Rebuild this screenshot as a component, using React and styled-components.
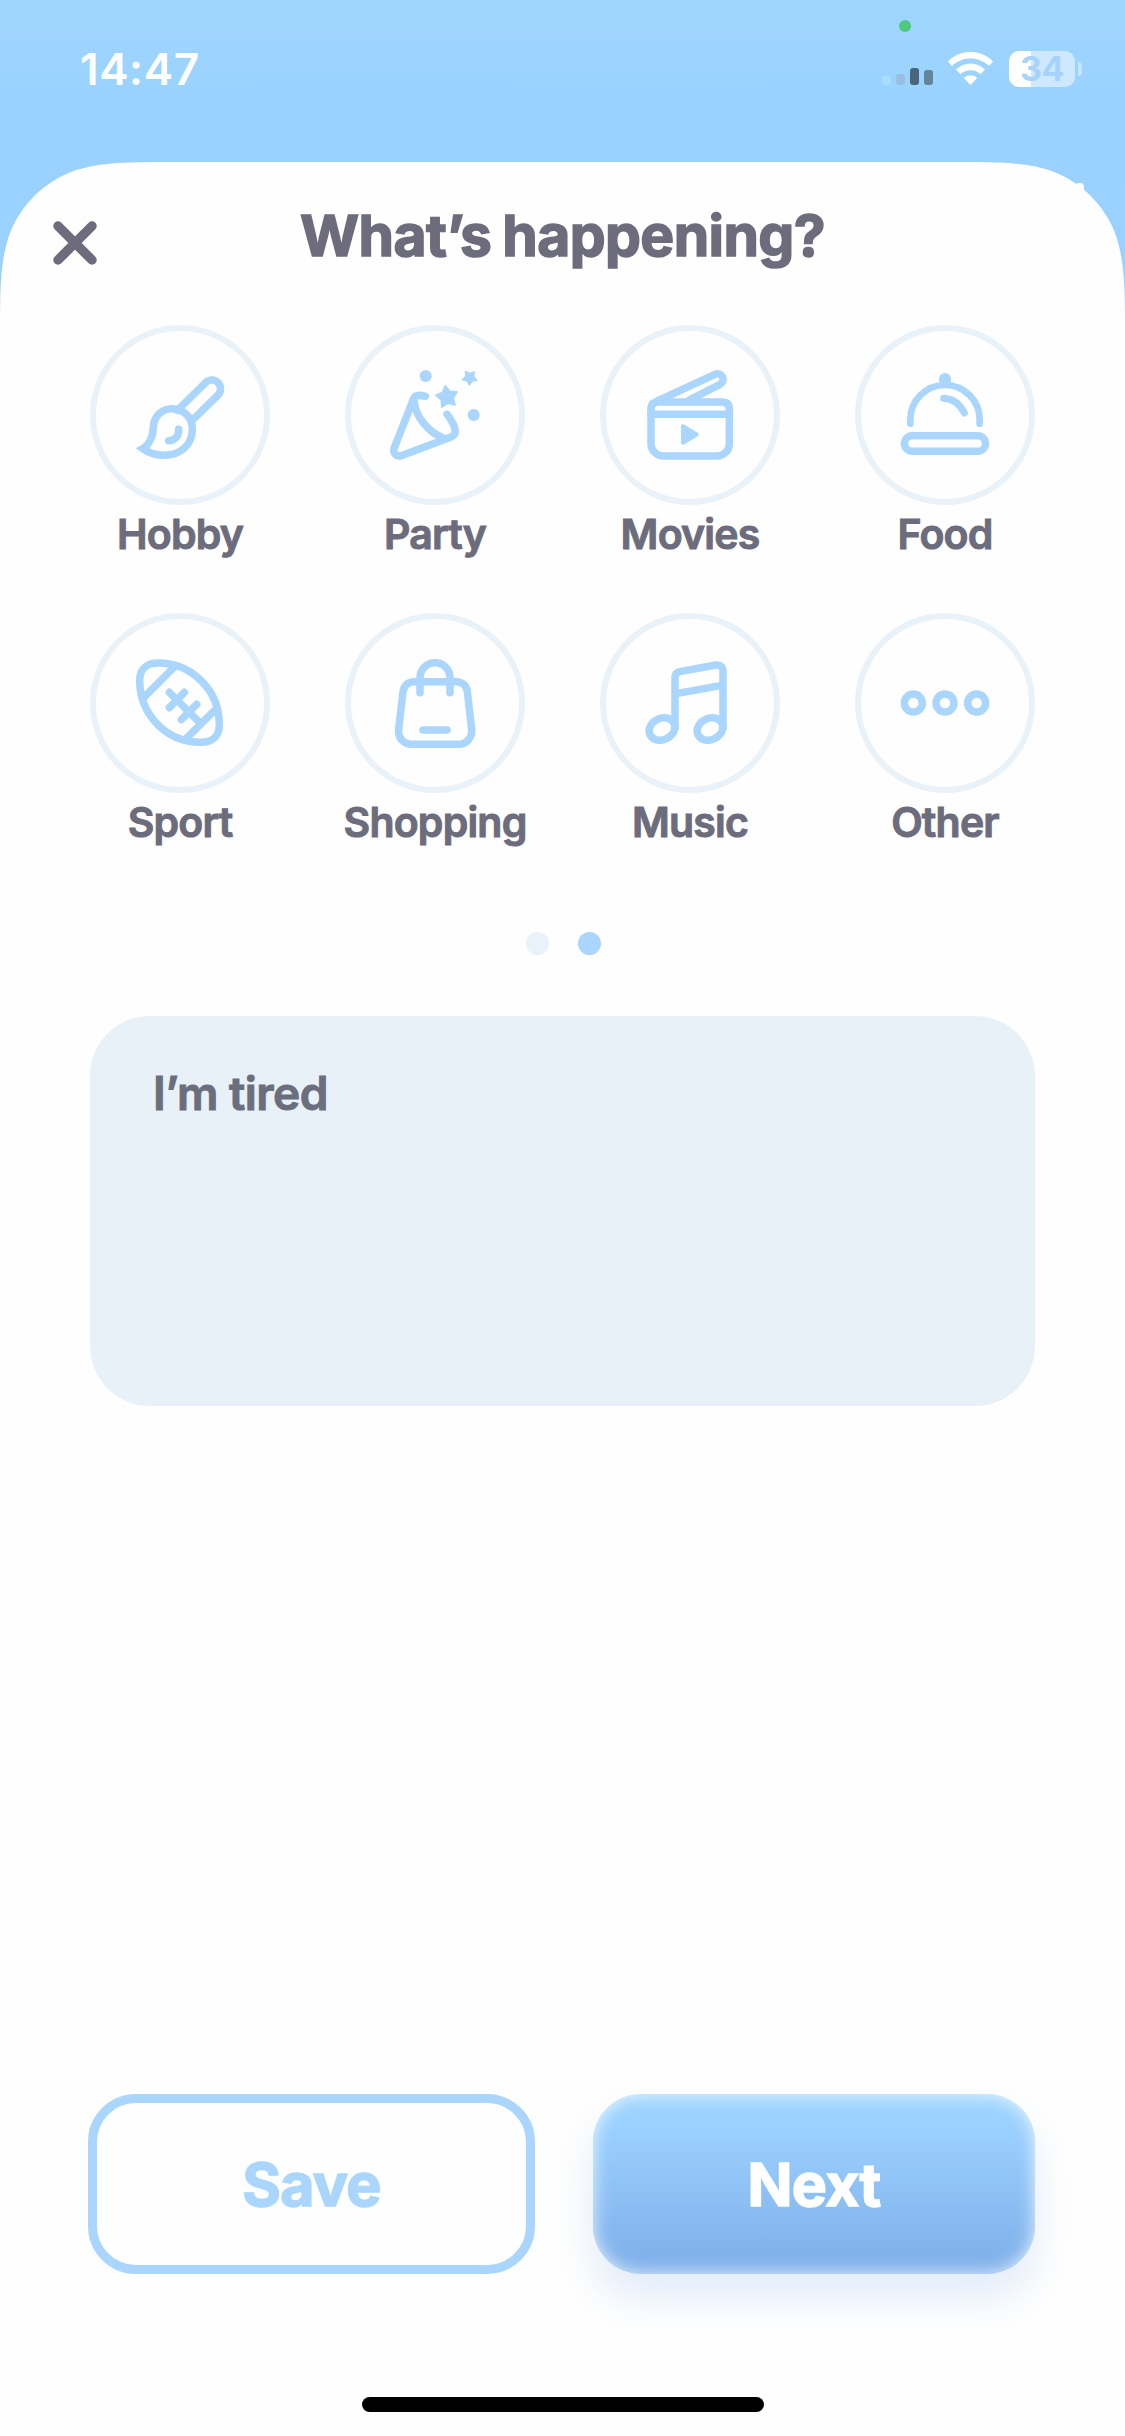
import React from 'react'
import styled, {createGlobalStyle} from 'styled-components'

const sky = '#aad5fd'
const ink = '#6c6c7c'
const mist = '#eaf2f9'

const starPoints = (cx, cy, r, turn) =>
  Array.from({length: 10}, (_, i) => {
    const radius = i % 2 ? r * 0.56 : r
    const angle = ((turn + i * 36) * Math.PI) / 180
    return `${(cx + radius * Math.cos(angle)).toFixed(1)},${(cy + radius * Math.sin(angle)).toFixed(1)}`
  }).join(' ')

const HobbyIcon = () => (
  <Glyph>
    <path d="M292 286 L377 203 A26 26 0 0 1 414 240 L336 317" />
    <path strokeLinejoin="miter" d="M188 401 C207 390 220 365 220 335 C222 303 246 281 276 281 C311 281 337 307 337 343 C337 389 302 421 253 421 C227 421 205 413 188 401 Z" />
    <path d="M296 343 C297 363 284 377 266 377" />
  </Glyph>
)

const PartyIcon = () => (
  <Glyph>
    <path d="M271 244 C257 240 240 239 235 253 L178 398 C172 414 184 427 199 422 L350 365 C369 357 361 331 336 298" />
    <path d="M238 262 C243 308 284 354 324 368" />
    <circle cx="272" cy="183" r="18" fill={sky} stroke="none" />
    <circle cx="416" cy="300" r="18" fill={sky} stroke="none" />
    <polygon points={starPoints(336, 246, 34, -99)} fill={sky} strokeWidth="5" />
    <polygon points={starPoints(404, 188, 22.5, 92)} fill={sky} strokeWidth="4" />
  </Glyph>
)

const MoviesIcon = () => (
  <Glyph>
    <path d="M205 261 H396 Q418 261 418 283 V386 A37 37 0 0 1 381 423 H220 A37 37 0 0 1 183 386 V283 Q183 261 205 261 Z" />
    <path d="M183 298 H418" />
    <path d="M202 258 L375 178 A16.5 16.5 0 0 1 390 208 L300 254" />
    <path d="M279 334 V383 L320 358.500 Z" fill={sky} strokeWidth="12" />
  </Glyph>
)

const FoodIcon = () => (
  <Glyph>
    <path strokeWidth="20" d="M196 326 V314 A104 104 0 0 1 404 314 V326" />
    <path strokeWidth="36" d="M300 192 V196" />
    <path strokeWidth="21" d="M296 250 C324 251 345 268 358 294" />
    <rect x="178.500" y="362.500" width="243" height="46" rx="23" />
  </Glyph>
)

const SportIcon = () => (
  <Glyph>
    <path d="M179 231 C179 199 201 180 235 180 C330 180 418 256 418 366 C418 399 398 418 362 418 C255 418 179 331 179 231 Z" />
    <path d="M281 194 L192 283 M407 319 L319 406" />
    <path d="M268 268 L356 356 M313 268 L268 314 M350 304 L304 350" />
  </Glyph>
)

const ShoppingIcon = () => (
  <Glyph>
    <path d="M237 236 H363 C383 236 395 249 397 266 L410 379 C412 404 395 424 370 424 H232 C206 424 188 404 191 379 L204 266 C207 247 219 236 237 236 Z" />
    <path d="M255 269 V224 A45 45 0 0 1 345 224 V269" />
    <path d="M264 381 H336" />
  </Glyph>
)

const MusicIcon = () => (
  <Glyph>
    <path d="M255 373 V223 Q255 209 269 206 L378 186 Q399 185 399 205 V373" />
    <path d="M258 272 L396 247" />
    <ellipse cx="216" cy="378" rx="40" ry="32" transform="rotate(-25 216 378)" />
    <ellipse cx="360" cy="378" rx="40" ry="32" transform="rotate(-25 360 378)" />
  </Glyph>
)

const OtherIcon = () => (
  <Glyph>
    <circle cx="205" cy="300" r="27" />
    <circle cx="300" cy="300" r="27" />
    <circle cx="395" cy="300" r="27" />
  </Glyph>
)

const activities = [
  {name: 'Hobby', Icon: HobbyIcon},
  {name: 'Party', Icon: PartyIcon},
  {name: 'Movies', Icon: MoviesIcon},
  {name: 'Food', Icon: FoodIcon},
  {name: 'Sport', Icon: SportIcon},
  {name: 'Shopping', Icon: ShoppingIcon},
  {name: 'Music', Icon: MusicIcon},
  {name: 'Other', Icon: OtherIcon},
]

const StatusBar = () => (
  <Status>
    <Clock>14:47</Clock>
    <Indicators>
      <Signal>
        <Bar $height={9} $color="#aadcff" />
        <Bar $height={11} $color="#97bfe2" />
        <Bar $height={17} $color="#4b6579" />
        <Bar $height={15} $color="#63849d" />
      </Signal>
      <Wifi viewBox="0 0 45 33">
        <path d="M0 9.500 C12 -3.200 33 -3.200 45 9.500 L41 14 C31 4 14 4 4 14 Z" />
        <path d="M8 17.500 C16 9.500 29 9.500 37 17.500 L32.500 22.200 C27 17 18 17 12.500 22.200 Z" />
        <path d="M15.800 26 C19.500 22.300 25.500 22.300 29.200 26 L22.500 33 Z" />
      </Wifi>
      <Battery>
        <Charge>34</Charge>
        <Nub />
      </Battery>
    </Indicators>
    <PrivacyDot />
    <Sparkle />
  </Status>
)

const App = () => (
  <Screen>
    <GlobalStyle />
    <StatusBar />
    <Sheet>
      <Header>
        <CloseButton aria-label="Close">
          <svg width="44" height="44" viewBox="0 0 44 44" stroke={ink} strokeWidth="9.500" strokeLinecap="round">
            <path d="M5 5 L39 39 M39 5 L5 39" />
          </svg>
        </CloseButton>
        <Title>What’s happening?</Title>
      </Header>
      <Activities>
        {activities.map(({name, Icon}) => (
          <Activity key={name}>
            <Ring><Icon /></Ring>
            <Label>{name}</Label>
          </Activity>
        ))}
      </Activities>
      <Pager>
        <Dot />
        <Dot $active />
      </Pager>
      <Note>I’m tired</Note>
      <Actions>
        <SaveButton>Save</SaveButton>
        <NextButton>Next</NextButton>
      </Actions>
      <HomeIndicator />
    </Sheet>
  </Screen>
)

export default App

const GlobalStyle = createGlobalStyle`
  * {
    box-sizing: border-box;
  }

  body {
    margin: 0;
    font-family: Inter, 'Liberation Sans', sans-serif;
    color: ${ink};
  }
`

const Screen = styled.div`
  width: 1125px;
  height: 2436px;
  display: flex;
  flex-direction: column;
  overflow: hidden;
  background: linear-gradient(#9fd6ff, #9ad2ff 100px, #99d0ff 340px);
`

const Status = styled.div`
  position: relative;
  flex: none;
  height: 162px;
  padding: 47px 43px 0 80px;
  display: flex;
  justify-content: space-between;
  align-items: flex-start;
  color: white;
`

const Clock = styled.span`
  font-size: 44px;
  line-height: 44px;
  font-weight: 600;
  letter-spacing: 0.6px;
`

const Indicators = styled.div`
  display: flex;
  align-items: flex-end;
  padding-top: 4px;
`

const Signal = styled.div`
  display: flex;
  align-items: flex-end;
  gap: 5px;
  margin: 0 15px 2px 0;
`

const Bar = styled.span`
  width: 9px;
  height: ${({$height}) => $height}px;
  border-radius: 3px;
  background: ${({$color}) => $color};
`

const Wifi = styled.svg`
  width: 45px;
  height: 33px;
  margin: 0 16px 2px 0;
  fill: white;
`

const Battery = styled.div`
  display: flex;
  align-items: center;
  gap: 3px;
`

const Charge = styled.span`
  width: 66px;
  height: 36px;
  border-radius: 10px;
  background: linear-gradient(90deg, white 22px, #cee8ff 22px);
  color: #a5d3fb;
  font-size: 34px;
  line-height: 36px;
  font-weight: 700;
  letter-spacing: -0.5px;
  text-align: center;
`

const Nub = styled.span`
  width: 4px;
  height: 14px;
  border-radius: 0 4px 4px 0;
  background: #c6e5ff;
`

const PrivacyDot = styled.span`
  position: absolute;
  top: 20px;
  left: 899px;
  width: 12px;
  height: 12px;
  border-radius: 50%;
  background: #4dca7c;
`

const Sparkle = styled.span`
  position: absolute;
  top: 183px;
  left: 1075px;
  width: 9px;
  height: 12px;
  border-radius: 4px;
  background: white;
`

/* continuous corners: the curve eases into the straight edges */
const Sheet = styled.main`
  flex: 1;
  display: flex;
  flex-direction: column;
  background: #fefefe;
  clip-path: path('M0 179 C0 127 0 102 8.800 74 C20 43.500 43.500 20 74 8.800 C102 0 127 0 179 0 H946 C998 0 1023 0 1051 8.800 C1081.500 20 1105 43.500 1116.200 74 C1125 102 1125 127 1125 179 V2274 H0 Z');
`

const Header = styled.header`
  height: 163px;
  padding: 0 53px;
  display: grid;
  grid-template-columns: 44px 1fr 44px;
  align-items: start;
`

const CloseButton = styled.button`
  margin-top: 59px;
  padding: 0;
  border: 0;
  background: none;
  line-height: 0;
  cursor: pointer;
`

const Title = styled.h1`
  margin: 39px 0 0;
  font-size: 57px;
  line-height: 70px;
  font-weight: 700;
  letter-spacing: -0.6px;
  word-spacing: -2px;
  text-align: center;
  white-space: nowrap;
  -webkit-text-stroke: 1.5px ${ink};
  stroke-linejoin: round;
`

const Activities = styled.section`
  padding: 0 52.5px;
  display: grid;
  grid-template-columns: repeat(4, 255px);
  grid-auto-rows: 288px;
`

const Activity = styled.div`
  display: flex;
  flex-direction: column;
  align-items: center;
`

const Ring = styled.div`
  width: 180px;
  height: 180px;
  border: 6px solid ${mist};
  border-radius: 50%;
  display: flex;
  align-items: center;
  justify-content: center;
`

const Glyph = styled.svg.attrs({viewBox: '156 156 288 288'})`
  width: 96px;
  height: 96px;
  fill: none;
  stroke: ${sky};
  stroke-width: 22.5px;
  stroke-linecap: round;
  stroke-linejoin: round;
  overflow: visible;
`

const Label = styled.span`
  margin-top: 4px;
  font-size: 41px;
  line-height: 50px;
  font-weight: 600;
  letter-spacing: -0.8px;
  -webkit-text-stroke: 1px ${ink};
  stroke-linejoin: round;
`

const Pager = styled.div`
  margin-top: 31px;
  padding-left: 2px;
  display: flex;
  justify-content: center;
  gap: 29px;
`

const Dot = styled.span`
  width: 23px;
  height: 23px;
  border-radius: 50%;
  background: ${({$active}) => ($active ? sky : mist)};
`

const Note = styled.div`
  margin: 61px 90px 0;
  height: 390px;
  padding: 48px 63px;
  border-radius: 60px;
  background: #e9f1f8;
  color: #6b6e7c;
  font-size: 46px;
  line-height: 58px;
  font-weight: 600;
  letter-spacing: -0.5px;
  -webkit-text-stroke: 1px #6b6e7c;
  stroke-linejoin: round;
`

const Actions = styled.div`
  margin-top: auto;
  padding: 0 90px 0 88px;
  display: grid;
  grid-template-columns: 447px 442px;
  justify-content: space-between;
`

const Button = styled.button`
  height: 180px;
  padding: 0;
  border-radius: 48px;
  font-family: inherit;
  font-size: 59px;
  font-weight: 700;
  letter-spacing: -0.7px;
  cursor: pointer;
  -webkit-text-stroke: 1.5px currentColor;
  stroke-linejoin: round;
`

const SaveButton = styled(Button)`
  border: 9px solid ${sky};
  background: none;
  color: ${sky};
`

const NextButton = styled(Button)`
  border: 0;
  background: linear-gradient(#9fd6ff, #9ad0fe 20%, #7daee8);
  color: white;
  box-shadow: inset 0 0 18px rgba(255, 255, 255, 0.85), 0 24px 40px rgba(126, 174, 233, 0.22);
`

const HomeIndicator = styled.div`
  align-self: center;
  width: 402px;
  height: 15px;
  margin: 123px 0 24px;
  border-radius: 8px;
  background: black;
`
